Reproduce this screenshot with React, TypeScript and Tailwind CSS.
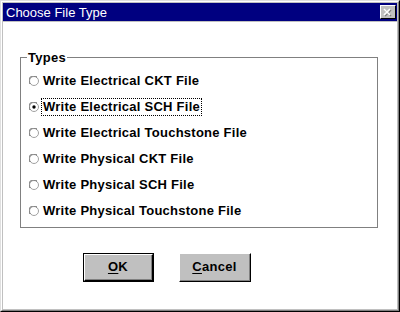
const font = "font-['Liberation_Sans',Arial,sans-serif]";

const options = [
  "Write Electrical CKT File",
  "Write Electrical SCH File",
  "Write Electrical Touchstone File",
  "Write Physical CKT File",
  "Write Physical SCH File",
  "Write Physical Touchstone File",
];

function Radio({ on }: { on: boolean }) {
  return (
    <svg width="10" height="10" viewBox="0 0 10 10" className="shrink-0">
      <circle cx="5" cy="5" r="4.5" fill="#fff" stroke="#a0a0a0" />
      <path d="M1.2 8 A4.5 4.5 0 0 1 8 1.2" fill="none" stroke="#606060" />
      {on && <circle cx="5" cy="5" r="1.7" fill="#000" />}
    </svg>
  );
}

function Btn({ label, u, def }: { label: string; u: string; def?: boolean }) {
  return (
    <button
      className={`h-[29px] ${def ? "w-[71px] border border-black" : "w-[72px]"} bg-[#c0c0c0] p-0`}
    >
      <div className="h-full w-full border-t border-l border-white border-r border-b border-r-black border-b-black">
        <div className="h-full w-full border-r border-b border-[#808080] flex items-center justify-center text-[13px] tracking-[0.3px] font-bold text-black">
          <span className="underline underline-offset-2">{u}</span>
          {label}
        </div>
      </div>
    </button>
  );
}

export default function App() {
  return (
    <div className={`w-[400px] h-[312px] ${font} border-t border-l border-[#dfdfdf] border-r border-b border-r-black border-b-black`}>
      <div className="h-full border-t border-l border-white border-r border-b border-r-[#808080] border-b-[#808080] bg-[#c0c0c0] p-px flex flex-col">
        <div className="h-[18px] bg-[#000080] flex items-center justify-between pl-[3px] pr-[1px]">
          <span className="text-white text-[13px] leading-none pt-px">Choose File Type</span>
          <div className="w-[16px] h-[14px] bg-[#c0c0c0] border-t border-l border-white border-r border-b border-r-black border-b-black flex items-center justify-center">
            <svg width="10" height="9" viewBox="0 0 10 9">
              <path d="M1 1 L7 7 M7 1 L1 7" stroke="#808080" strokeWidth="1.6" transform="translate(1 1)" />
              <path d="M1 1 L7 7 M7 1 L1 7" stroke="#fff" strokeWidth="1.6" />
            </svg>
          </div>
        </div>
        <div className="mt-px flex-1 bg-white pt-[29px] pl-[17px]">
          <fieldset className="w-[358px] border border-[#808080] pb-[3px]">
            <legend className="ml-[6px] px-[1px] text-[13px] tracking-[0.3px] font-bold leading-[13px] text-black">Types</legend>
            <div className="mt-[4px] flex flex-col">
              {options.map((o, i) => (
                <div key={o} className="h-[26px] flex items-center pl-[8px] gap-[2px] text-[13px] tracking-[0.25px] font-bold text-black">
                  <Radio on={i === 1} />
                  <span className={`px-[1px] leading-[16px] border border-dotted ${i === 1 ? "border-black" : "border-transparent"}`}>{o}</span>
                </div>
              ))}
            </div>
          </fieldset>
          <div className="mt-[25px] pl-[63px] flex gap-[25px]">
            <Btn u="O" label="K" def />
            <Btn u="C" label="ancel" />
          </div>
        </div>
      </div>
    </div>
  );
}
